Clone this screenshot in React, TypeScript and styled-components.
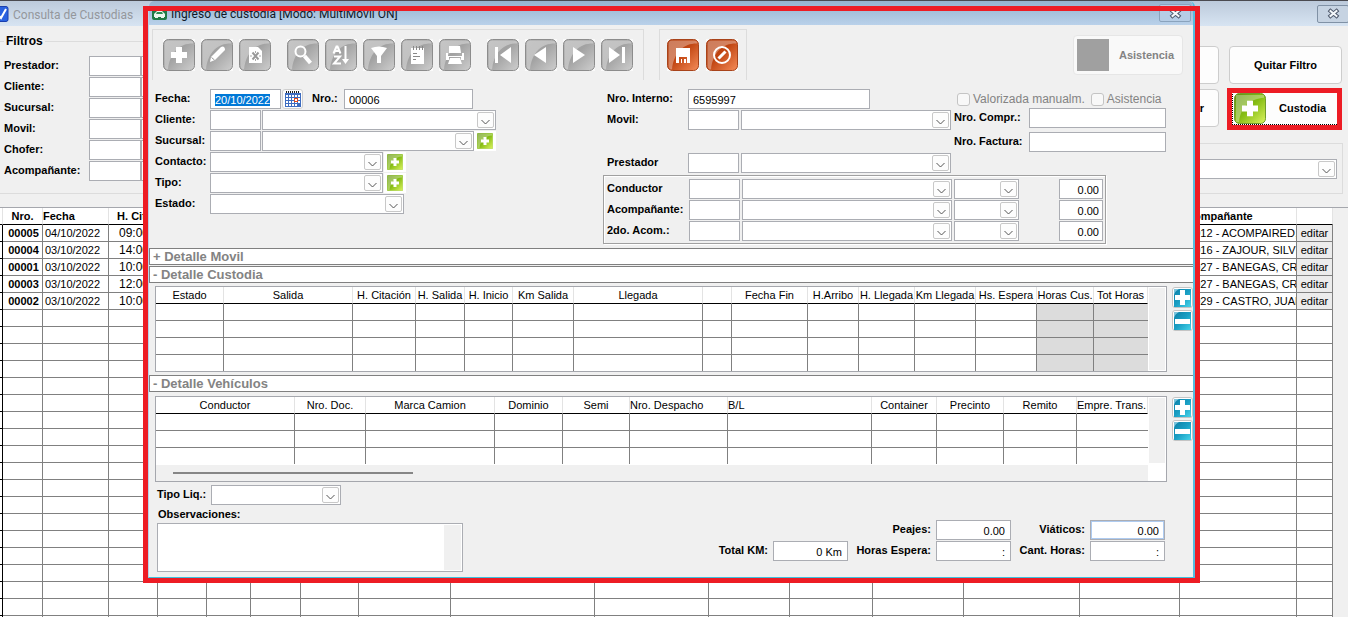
import React, { ReactNode, useEffect, useId, useRef } from "react";
import styled, { createGlobalStyle, css } from "styled-components";

const RED = "#ed1c24";
const LINE = "#808080";
const FIELD = "#abadb3";

const GlobalStyle = createGlobalStyle`
  * { box-sizing: border-box; }
  body {
    margin: 0;
    background: #f0f0f0;
    color: #000;
    font: 11px/13px "Liberation Sans", Arial, sans-serif;
  }
  input, select, textarea, button { font: inherit; color: inherit; margin: 0; }
  ::selection { background: #0078d7; color: #fff; }
`;

/* ---------- window chrome ---------- */

const Desktop = styled.div`
  position: relative;
  height: 100vh;
  overflow: hidden;
  display: flex;
  flex-direction: column;
  border-top: 1px solid #4a4a50;
`;

const TitleBar = styled.header<{ $active?: boolean }>`
  display: flex;
  align-items: center;
  flex: none;
  height: ${(p) => (p.$active ? 24 : 25)}px;
  gap: 4px;
  padding-left: ${(p) => (p.$active ? 3 : 0)}px;
  background: ${(p) =>
    p.$active
      ? "linear-gradient(#96b3cf, #b9d1ea)"
      : "linear-gradient(#bccadb, #d7e4f2)"};
  color: ${(p) => (p.$active ? "#101a28" : "#94979c")};
  border-radius: ${(p) => (p.$active ? "5px 5px 0 0" : "0")};
`;

const Title = styled.h1`
  flex: 1;
  margin: 0;
  padding-top: 2px;
  font: 12px/16px Roboto, "Open Sans", sans-serif;
  white-space: nowrap;
`;

const CloseButton = styled.button<{ $active?: boolean }>`
  display: grid;
  place-items: center;
  width: 32px;
  height: 18px;
  margin-right: ${(p) => (p.$active ? 2 : -1)}px;
  padding: 0;
  border: 1px solid ${(p) => (p.$active ? "#8aa3bd" : "#8091a5")};
  border-radius: 2px;
  background: ${(p) => (p.$active ? "#b6cde6" : "#c6d3e2")};
`;

const Modal = styled.section`
  position: absolute;
  left: 148px;
  right: 153px;
  top: 0;
  display: flex;
  flex-direction: column;
  background: #f0f0f0;
  border-left: 1px solid #b9d1ea;
  border-right: 2px solid #55bde0;
  border-bottom: 1px solid #3fc0dc;
  border-radius: 6px 6px 0 0;
`;

const ModalHighlight = styled.div`
  position: absolute;
  inset: 5px -7px -6px -6px;
  border: 5px solid ${RED};
  pointer-events: none;
`;

/* ---------- form parts ---------- */

const Label = styled.label<{ $w?: number; $right?: boolean }>`
  flex: none;
  width: ${(p) => (p.$w ? `${p.$w}px` : "auto")};
  font-weight: bold;
  white-space: nowrap;
  text-align: ${(p) => (p.$right ? "right" : "left")};
  padding-right: ${(p) => (p.$right ? 5 : 0)}px;
  padding-bottom: 2px;
`;

const Row = styled.div<{ $spaced?: boolean }>`
  display: flex;
  align-items: center;
  height: 20px;
  margin-top: ${(p) => (p.$spaced ? 22 : 0)}px;
`;

const Stack = styled.div<{ $gap?: number }>`
  display: flex;
  flex-direction: column;
  gap: ${(p) => p.$gap ?? 1}px;
`;

const Input = styled.input<{ $w: number; $num?: boolean; $lit?: boolean }>`
  flex: none;
  width: ${(p) => p.$w}px;
  height: 20px;
  padding: 2px ${(p) => (p.$num ? 5 : 3)}px 0 ${(p) => (p.$num ? 2 : 4)}px;
  border: 1px solid ${FIELD};
  background: #fff;
  outline: none;
  text-align: ${(p) => (p.$num ? "right" : "left")};
  ${(p) => p.$lit && css`box-shadow: inset 0 0 0 1px #aecbf0;`}
`;

const Pair = styled.div<{ $gap?: number }>`
  display: flex;
  gap: ${(p) => p.$gap ?? 1}px;
`;

const SelectBox = styled.span<{ $w?: number }>`
  display: grid;
  flex: ${(p) => (p.$w ? "none" : "1")};
  width: ${(p) => (p.$w ? `${p.$w}px` : "auto")};
  height: 20px;
  & > * { grid-area: 1 / 1; }
`;

const NativeSelect = styled.select`
  appearance: none;
  width: 100%;
  height: 20px;
  padding: 0 20px 0 4px;
  border: 1px solid ${FIELD};
  border-radius: 0;
  background: #fff;
`;

const Arrow = styled.span`
  justify-self: end;
  display: grid;
  place-items: center;
  width: 17px;
  height: 16px;
  margin: 2px 2px 0 0;
  padding-top: 3px;
  border: 1px solid #c8c8c8;
  border-radius: 2px;
  background: #fdfdfd;
  pointer-events: none;
`;

function Select({ w, id, label }: { w?: number; id?: string; label?: string }) {
  return (
    <SelectBox $w={w}>
      <NativeSelect id={id} aria-label={label} />
      <Arrow>
        <svg width="9" height="6" viewBox="0 0 9 6" fill="none" stroke="#555">
          <path d="M.5 1l4 4 4-4" />
        </svg>
      </Arrow>
    </SelectBox>
  );
}

const AddButton = styled.button`
  display: grid;
  place-items: center;
  width: 22px;
  height: 20px;
  padding: 0;
  border: 0;
  background: #fff;
`;

function GreenPlus({ w, h, round }: { w: number; h: number; round?: boolean }) {
  const id = useId();
  return (
    <svg width={w} height={h} viewBox="0 0 32 32" preserveAspectRatio="none" aria-hidden="true">
      <defs>
        <linearGradient id={id} x1="0" y1="0" x2="1" y2="1">
          <stop offset="0" stopColor="#5f9010" />
          <stop offset=".5" stopColor="#86bd14" />
          <stop offset="1" stopColor="#dcf460" />
        </linearGradient>
      </defs>
      <rect x=".5" y=".5" width="31" height="31" rx={round ? 5 : 1} fill={`url(#${id})`} stroke={round ? "#6f9a2a" : "#9cc83c"} />
      <path d="M2 2h28v3C17 6 7 13 5 30H2z" fill="#fff" opacity=".32" />
      <path d="M13 8h6v5h5v6h-5v5h-6v-5H8v-6h5z" fill="#fff" />
    </svg>
  );
}

function Add({ label }: { label: string }) {
  return (
    <AddButton type="button" aria-label={label}>
      <GreenPlus w={16} h={16} />
    </AddButton>
  );
}

/* ---------- toolbar ---------- */

const Toolbar = styled.div`
  display: flex;
  align-items: flex-start;
  padding: 4px 10px 0 3px;
  gap: 15px;
  height: 56px;
`;

const ToolGroup = styled.div<{ $tight?: boolean }>`
  display: flex;
  gap: ${(p) => (p.$tight ? 7 : 16)}px;
  height: 51px;
  padding: ${(p) => (p.$tight ? "9px 8px 0 7px" : "9px 10px 0 10px")};
  border: 1px solid #dcdcdc;
  border-bottom: 0;
`;

const ToolSet = styled.div`
  display: flex;
  gap: 6px;
`;

const ToolButton = styled.button`
  display: block;
  width: 32px;
  height: 32px;
  padding: 0;
  border: 0;
  background: #fafafa;
  line-height: 0;
`;

function Tool({ label, hot, children }: { label: string; hot?: boolean; children: ReactNode }) {
  const id = useId();
  return (
    <ToolButton type="button" aria-label={label}>
      <svg width="32" height="32" viewBox="0 0 32 32">
        <defs>
          <linearGradient id={id} x1="0" y1="0" x2="1" y2="1">
            <stop offset="0" stopColor={hot ? "#b03808" : "#a8a8a8"} />
            <stop offset=".45" stopColor={hot ? "#c04410" : "#a2a2a2"} />
            <stop offset="1" stopColor={hot ? "#f58d5a" : "#cecece"} />
          </linearGradient>
        </defs>
        <rect x=".5" y=".5" width="31" height="31" rx="5" fill={`url(#${id})`} stroke={hot ? "#a8431a" : "#8c8c8c"} />
        <path d="M5 1.500h22q3.500 0 3.500 3C18 4 7 12 5 30.500q-3.500 0-3.500-4V5q0-3.500 3.500-3.500z" fill="#fff" opacity=".34" />
        {children}
      </svg>
    </ToolButton>
  );
}

const AttendanceButton = styled.button`
  display: flex;
  align-items: center;
  gap: 10px;
  width: 110px;
  height: 40px;
  margin: 6px 0 0 auto;
  padding: 0 5px 0 3px;
  border: 1px solid #e6e6e6;
  border-radius: 4px;
  background: #f9f9f9;
  color: #838383;
  font-weight: bold;
`;

const Swatch = styled.span`
  width: 32px;
  height: 32px;
  background: #a0a0a0;
`;

/* ---------- modal layout ---------- */

const FormArea = styled.div`
  display: flex;
  height: 167px;
  padding: 8px 10px 0 6px;
`;

const LeftForm = styled(Stack)`
  flex: none;
  width: 448px;
`;

const RightForm = styled.div`
  display: flex;
  flex-direction: column;
  gap: 2px;
`;

const RightTop = styled.div`
  display: flex;
  gap: 3px;
  padding-left: 4px;
`;

const Crew = styled(Stack)`
  align-self: flex-start;
  padding: 3px 2px 2px 3px;
  border: 1px solid #a0a0a0;
  box-shadow: inset 1px 1px 0 #fff, 1px 1px 0 #fff;
`;

const CrewRow = styled(Row)`
  gap: 2px;
`;

const CrewAmount = styled.div`
  padding-left: 38px;
`;

const AmountInput = styled(Input)`
  padding-right: 3px;
`;

const CalendarButton = styled.button`
  display: grid;
  place-items: center;
  width: 21px;
  height: 20px;
  margin: 0 0 0 1px;
  padding: 0;
  border: 1px solid #cfcfcf;
  border-radius: 3px;
  background: #fdfdfd;
`;

const NumberLabel = styled(Label)`
  padding-left: 9px;
`;

const CheckRow = styled.div`
  display: flex;
  align-items: center;
  height: 19px;
  padding: 2px 0 0 3px;
  gap: 6px;
`;

const CheckLabel = styled.label`
  display: flex;
  align-items: center;
  gap: 3px;
  color: #838383;
  font-size: 12px;
  white-space: nowrap;
`;

const Check = styled.input`
  appearance: none;
  width: 13px;
  height: 13px;
  border: 1px solid #c4c4c4;
  border-radius: 3px;
  background: #f8f8f8;
`;

const SectionBar = styled.button<{ $after?: boolean }>`
  display: block;
  height: 17px;
  margin-top: ${(p) => (p.$after ? 1 : 0)}px;
  padding: 0 3px;
  border: 1px solid ${LINE};
  border-right: 0;
  background: #fff;
  color: #838383;
  font-weight: bold;
  font-size: 13px;
  line-height: 15px;
  text-align: left;
`;

const GridArea = styled.div<{ $top: number }>`
  display: flex;
  gap: 5px;
  padding: ${(p) => p.$top}px 0 3px 6px;
`;

const GridBox = styled.div`
  flex: 1;
  min-width: 0;
  display: grid;
  grid-template-columns: minmax(0, 1fr) 18px;
  align-content: start;
  height: 86px;
  border: 1px solid #a5a7ad;
  background: #fff;
`;

const DataTable = styled.table`
  width: 100%;
  table-layout: fixed;
  border-collapse: separate;
  border-spacing: 0;
  background: #fff;
`;

const HeadCell = styled.th<{ $left?: boolean; $bold?: boolean }>`
  height: 17px;
  padding: 1px 0 0 0;
  border-right: 1px solid #e3e3e3;
  border-bottom: 1px solid #000;
  font-weight: ${(p) => (p.$bold ? "bold" : "normal")};
  text-align: ${(p) => (p.$left ? "left" : "center")};
  white-space: nowrap;
  overflow: hidden;
`;

const Cell = styled.td<{ $shade?: boolean; $last?: boolean; $edge?: boolean }>`
  height: ${(p) => (p.$last ? 16 : 17)}px;
  padding: 0;
  border-right: ${(p) => (p.$edge ? 0 : 1)}px solid ${LINE};
  border-bottom: ${(p) => (p.$last ? 0 : 1)}px solid ${LINE};
  background: ${(p) => (p.$shade ? "#dcdcdc" : "#fff")};
`;

const VScroll = styled.div`
  border: 1px solid #fff;
  background: #f0f0f0;
`;

const HScroll = styled.div`
  display: flex;
  align-items: center;
  height: 17px;
  padding: 0 0 1px 17px;
  border-top: 1px solid #fff;
  background: #f0f0f0;
`;

const Thumb = styled.div`
  width: 240px;
  height: 2px;
  background: #868686;
`;

const SideButtons = styled.div`
  display: flex;
  flex-direction: column;
  gap: 2px;
  padding-top: 1px;
`;

const SideButton = styled.button`
  width: 21px;
  height: 21px;
  padding: 0;
  border: 1px solid #c4c4c4;
  border-radius: 3px;
  background: #fff;
  line-height: 0;
`;

function BlueButton({ minus, label }: { minus?: boolean; label: string }) {
  const id = useId();
  return (
    <SideButton type="button" aria-label={label}>
      <svg width="19" height="19" viewBox="0 0 19 19">
        <defs>
          <linearGradient id={id} x1="0" y1="0" x2="1" y2="1">
            <stop offset="0" stopColor="#0d7fa6" />
            <stop offset=".5" stopColor="#1a9fc4" />
            <stop offset="1" stopColor="#46d4ea" />
          </linearGradient>
        </defs>
        <rect x="1" y="1" width="17" height="18" fill={`url(#${id})`} />
        <path d="M1 1h5Q2 3 1 7z" fill="#7cc4dc" />
        <path d={minus ? "M2 8h15v5H2z" : "M7 2h5v5h5v5h-5v5H7v-5H2V7h5z"} fill="#fff" />
      </svg>
    </SideButton>
  );
}

interface Column {
  name: string;
  w?: number;
  left?: boolean;
  shade?: boolean;
}

const custodyColumns: Column[] = [
  { name: "Estado", w: 68 },
  { name: "Salida", w: 129 },
  { name: "H. Citación", w: 63 },
  { name: "H. Salida", w: 49 },
  { name: "H. Inicio", w: 48 },
  { name: "Km Salida", w: 61 },
  { name: "Llegada" },
  { name: "", w: 29 },
  { name: "Fecha Fin", w: 76 },
  { name: "H.Arribo", w: 51 },
  { name: "H. Llegada", w: 56 },
  { name: "Km Llegada", w: 61 },
  { name: "Hs. Espera", w: 61 },
  { name: "Horas Cus.", w: 57, shade: true },
  { name: "Tot Horas", w: 54, shade: true },
];

const vehicleColumns: Column[] = [
  { name: "Conductor", w: 139 },
  { name: "Nro. Doc.", w: 71 },
  { name: "Marca Camion", w: 129 },
  { name: "Dominio", w: 68 },
  { name: "Semi", w: 67 },
  { name: "Nro. Despacho", w: 98, left: true },
  { name: "B/L", left: true },
  { name: "Container", w: 65 },
  { name: "Precinto", w: 67 },
  { name: "Remito", w: 73 },
  { name: "Empre. Trans.", w: 71, left: true },
];

function EmptyGrid({ columns, rows }: { columns: Column[]; rows: number }) {
  return (
    <DataTable>
      <colgroup>
        {columns.map((c, i) => (
          <col key={i} width={c.w} />
        ))}
      </colgroup>
      <thead>
        <tr>
          {columns.map((c, i) => (
            <HeadCell key={i} $left={c.left}>{c.name}</HeadCell>
          ))}
        </tr>
      </thead>
      <tbody>
        {Array.from({ length: rows }, (_, r) => (
          <tr key={r}>
            {columns.map((c, i) => (
              <Cell key={i} $shade={c.shade} $last={r === rows - 1} $edge={i === columns.length - 1} />
            ))}
          </tr>
        ))}
      </tbody>
    </DataTable>
  );
}

const Footer = styled.div`
  display: flex;
  justify-content: space-between;
  align-items: flex-end;
  padding: 0 28px 5px 8px;
`;

const NotesLabel = styled(Label)`
  display: block;
  padding: 3px 0 2px 1px;
`;

const NotesBox = styled.div`
  display: grid;
  grid-template-columns: 1fr 17px;
  width: 306px;
  height: 49px;
  padding: 1px;
  border: 1px solid ${FIELD};
  background: #fff;
`;

const Notes = styled.textarea`
  border: 0;
  padding: 2px;
  resize: none;
  outline: none;
  overflow: hidden;
`;

const NotesScroll = styled.div`
  background: #f0f0f0;
`;

const Totals = styled(Stack)`
  padding-bottom: 11px;
`;

const TotalRow = styled(Row)`
  justify-content: flex-end;
`;

/* ---------- list window behind ---------- */

const FilterArea = styled.div`
  display: flex;
  justify-content: space-between;
  flex: none;
  height: 182px;
  border-bottom: 1px solid #a5a7ad;
`;

const Filters = styled.fieldset`
  width: 420px;
  height: 160px;
  margin: 8px 0 0;
  padding: 8px 0 0 4px;
  border: 1px solid #dcdcdc;
  border-left: 0;
`;

const Legend = styled.legend`
  padding: 0 2px;
  font-weight: bold;
  font-size: 12px;
  line-height: 14px;
`;

const Actions = styled.div`
  display: flex;
  flex-direction: column;
  width: 440px;
  padding: 20px 5px 0 0;
`;

const ActionGrid = styled.div`
  display: grid;
  grid-template-columns: 113px 113px;
  grid-auto-rows: 38px;
  gap: 5px 10px;
  justify-content: end;
  padding-right: 1px;
`;

const ActionButton = styled.button<{ $end?: boolean }>`
  padding: 0 ${(p) => (p.$end ? 14 : 0)}px 0 0;
  border: 1px solid #cdcdcd;
  border-radius: 4px;
  background: #fdfdfd;
  font-weight: bold;
  text-align: ${(p) => (p.$end ? "right" : "center")};
`;

const CustodyWrap = styled.div`
  position: relative;
  display: grid;
  &::after {
    content: "";
    position: absolute;
    inset: -1px 0 -3px -2px;
    border: 5px solid ${RED};
    pointer-events: none;
  }
`;

const CustodyButton = styled.button`
  display: flex;
  padding: 2px;
  border: 1px solid #cdcdcd;
  background: #fdfdfd;
  font-weight: bold;
`;

const CustodyFocus = styled.span`
  display: flex;
  align-items: center;
  flex: 1;
  align-self: stretch;
  gap: 13px;
  padding-left: 1px;
  border: 1px dotted #000;
`;

const GroupBox = styled.div`
  display: flex;
  height: 51px;
  margin-top: 16px;
  padding: 15px 5px 0;
  border: 1px solid #dcdcdc;
`;

const ListArea = styled.div`
  flex: 1;
  overflow: hidden;
  padding-right: 15px;
  background: #f0f0f0;
`;

const ListCell = styled(Cell)<{ $align?: string; $bold?: boolean; $gutter?: boolean; $big?: boolean }>`
  padding: 0 0 0 2px;
  font-size: ${(p) => (p.$big ? 12 : 11)}px;
  font-weight: ${(p) => (p.$bold ? "bold" : "normal")};
  text-align: ${(p) => p.$align ?? "left"};
  white-space: nowrap;
  overflow: hidden;
  ${(p) => p.$gutter && css`border-right-color: #000; border-bottom-color: #000;`}
`;

const EditButton = styled.button`
  display: block;
  width: 100%;
  height: 16px;
  padding: 0;
  border: 0;
  background: #ececec;
`;

const records = [
  ["00005", "04/10/2022", "09:00", "00012 - ACOMPAIRED, ."],
  ["00004", "03/10/2022", "14:00", "00016 - ZAJOUR, SILVI"],
  ["00001", "03/10/2022", "10:00", "00027 - BANEGAS, CRI"],
  ["00003", "03/10/2022", "12:00", "00027 - BANEGAS, CRI"],
  ["00002", "03/10/2022", "10:00", "00029 - CASTRO, JUAN"],
];

const listWidths = [3, 40, 66, 49, 49, 44, 50, 58, 92, undefined, 114, 81, 83, 91, 116, 100, 117, 36];
const blankCells = [4, 5, 6, 7, 8, 9, 10, 11, 12, 13, 14, 15];

function RecordList() {
  return (
    <DataTable>
      <colgroup>
        {listWidths.map((w, i) => (
          <col key={i} width={w} />
        ))}
      </colgroup>
      <thead>
        <tr>
          <HeadCell />
          <HeadCell $bold>Nro.</HeadCell>
          <HeadCell $bold $left>Fecha</HeadCell>
          <HeadCell $bold>H. Cit.</HeadCell>
          {blankCells.map((i) => (
            <HeadCell key={i} />
          ))}
          <HeadCell $bold $left>Acompañante</HeadCell>
          <HeadCell />
        </tr>
      </thead>
      <tbody>
        {records.map(([nro, fecha, hora, acomp]) => (
          <tr key={nro}>
            <ListCell $gutter />
            <ListCell $bold $align="center">{nro}</ListCell>
            <ListCell>{fecha}</ListCell>
            <ListCell $align="center" $big>{hora}</ListCell>
            {blankCells.map((i) => (
              <ListCell key={i} />
            ))}
            <ListCell>{acomp}</ListCell>
            <Cell>
              <EditButton type="button">editar</EditButton>
            </Cell>
          </tr>
        ))}
        {Array.from({ length: 19 }, (_, r) => (
          <tr key={r}>
            {listWidths.map((_w, i) => (
              <ListCell key={i} $gutter={i === 0} />
            ))}
          </tr>
        ))}
      </tbody>
    </DataTable>
  );
}

function CloseIcon() {
  return (
    <svg width="13" height="11" viewBox="0 0 13 11" fill="none" strokeLinecap="square">
      <path d="M3.500 3l6 5M9.500 3l-6 5" stroke="#4b5568" strokeWidth="4" />
      <path d="M3.500 3l6 5M9.500 3l-6 5" stroke="#f4f7fa" strokeWidth="2" />
    </svg>
  );
}

const filterNames = ["Prestador:", "Cliente:", "Sucursal:", "Movil:", "Chofer:", "Acompañante:"];
const crewNames = ["Conductor", "Acompañante:", "2do. Acom.:"];

export default function App() {
  const dateRef = useRef<HTMLInputElement>(null);

  useEffect(() => {
    dateRef.current?.focus();
    dateRef.current?.select();
  }, []);

  return (
    <>
      <GlobalStyle />
      <Desktop>
        <TitleBar>
          <svg width="9" height="16" viewBox="0 0 9 16">
            <rect x="-8" y=".5" width="16" height="15" rx="2" fill="#2a62e0" stroke="#1a3fae" />
            <path d="M-1 10l2 2L6 3" fill="none" stroke="#fff" strokeWidth="2" />
          </svg>
          <Title>Consulta de Custodias</Title>
          <CloseButton type="button" aria-label="Cerrar consulta">
            <CloseIcon />
          </CloseButton>
        </TitleBar>

        <FilterArea>
          <Filters>
            <Legend>Filtros</Legend>
            <Stack>
              {filterNames.map((name, i) => (
                <Row key={name}>
                  <Label htmlFor={`filter-${i}`} $w={85}>{name}</Label>
                  <Pair $gap={0}>
                    <Input id={`filter-${i}`} $w={52} />
                    <Input aria-label={`${name} nombre`} $w={200} />
                  </Pair>
                </Row>
              ))}
            </Stack>
          </Filters>
          <Actions>
            <ActionGrid>
              <ActionButton type="button" aria-label="Filtrar" />
              <ActionButton type="button">Quitar Filtro</ActionButton>
              <ActionButton type="button" $end>Imprimir</ActionButton>
              <CustodyWrap>
                <CustodyButton type="button">
                  <CustodyFocus>
                    <GreenPlus w={32} h={31} round />
                    Custodia
                  </CustodyFocus>
                </CustodyButton>
              </CustodyWrap>
            </ActionGrid>
            <GroupBox>
              <Select label="Orden" />
            </GroupBox>
          </Actions>
        </FilterArea>

        <ListArea>
          <RecordList />
        </ListArea>

        <Modal role="dialog" aria-labelledby="dialog-title">
          <TitleBar $active>
            <svg width="15" height="14" viewBox="0 0 15 14">
              <rect width="15" height="14" rx="2" fill="#1f7a45" />
              <path d="M2 8l3-3h5l3 3v3H2z" fill="#e9f5ec" />
              <path d="M5 6h5l1 2H4z" fill="#2a8a52" />
              <path d="M3 11h3M9 11h3" stroke="#e9f5ec" strokeWidth="2" />
            </svg>
            <Title id="dialog-title">Ingreso de custodia [Modo: MultiMovil ON]</Title>
            <CloseButton type="button" $active aria-label="Cerrar ingreso">
              <CloseIcon />
            </CloseButton>
          </TitleBar>

          <Toolbar>
            <ToolGroup>
              <ToolSet>
                <Tool label="Nuevo">
                  <path d="M13 8h6v5h5v6h-5v5h-6v-5H8v-6h5z" fill="#fff" />
                </Tool>
                <Tool label="Modificar">
                  <path d="M9 23l1-5L20 8q2-1 3 0t1 3L14 21z" fill="#fff" />
                  <path d="M10.500 18.500l3 2.500" stroke="#999" />
                </Tool>
                <Tool label="Eliminar">
                  <path d="M10 8h9l4 4v12H10z" fill="#fff" />
                  <path d="M13.500 13.500l6 7M19.500 13.500l-6 7" stroke="#999" strokeWidth="2" />
                  <path d="M11 17h2M20 17h2M16.500 12v2M16.500 20v2" stroke="#aaa" />
                </Tool>
              </ToolSet>
              <ToolSet>
                <Tool label="Buscar">
                  <circle cx="13.500" cy="12.500" r="5" fill="#b5b5b5" stroke="#fff" strokeWidth="2" />
                  <path d="M17.500 17l6 7" stroke="#fff" strokeWidth="4" />
                </Tool>
                <Tool label="Ordenar">
                  <g fill="none" stroke="#fff" strokeWidth="2">
                    <path d="M8.500 14.500l3-7h1l3 7M10 12h5M9 17.500h6l-6 7h7M20.500 7v15" />
                    <path d="M17 20h7l-3.500 5z" fill="#fff" stroke="none" />
                  </g>
                </Tool>
                <Tool label="Filtrar">
                  <path d="M8 9q8-3 16 0l-6 8v7h-4v-7z" fill="#fff" />
                </Tool>
                <Tool label="Notas">
                  <path d="M10 9h13v16H10z" fill="#fff" />
                  <path d="M12.500 7v4M15.500 7v4M18.500 7v4M21.500 7v4" stroke="#888" />
                  <path d="M12 14.500h4M12 17.500h7M12 20.500h3" stroke="#888" />
                </Tool>
                <Tool label="Imprimir">
                  <path d="M10 7h11l1 7H10zM7 14h2v3h14v-3h2v7h-3v-3H10v3H7zM11 19h10l2 6H9z" fill="#fff" />
                </Tool>
              </ToolSet>
              <ToolSet>
                <Tool label="Primero">
                  <path d="M8 8h3v16H8zM24 8v16l-11-8z" fill="#fff" />
                </Tool>
                <Tool label="Anterior">
                  <path d="M21 8v16L9 16z" fill="#fff" />
                </Tool>
                <Tool label="Siguiente">
                  <path d="M10 8v16l12-8z" fill="#fff" />
                </Tool>
                <Tool label="Último">
                  <path d="M8 8v16l11-8zM21 8h3v16h-3z" fill="#fff" />
                </Tool>
              </ToolSet>
            </ToolGroup>
            <ToolGroup $tight>
              <Tool label="Guardar" hot>
                <path d="M9 9h14v15h-3v-6h-8v6H9zM14 20h1v4h-1zM17 20h2v4h-2z" fill="#fff" />
              </Tool>
              <Tool label="Cancelar" hot>
                <circle cx="16" cy="16" r="8" fill="none" stroke="#fff" strokeWidth="2" />
                <path d="M12.500 19.500l7-7" stroke="#fff" strokeWidth="3" />
              </Tool>
            </ToolGroup>
            <AttendanceButton type="button" disabled>
              <Swatch />
              Asistencia
            </AttendanceButton>
          </Toolbar>

          <FormArea>
            <LeftForm>
              <Row>
                <Label htmlFor="fecha" $w={55}>Fecha:</Label>
                <Input id="fecha" ref={dateRef} defaultValue="20/10/2022" $w={71} />
                <CalendarButton type="button" aria-label="Calendario">
                  <svg width="16" height="16" viewBox="0 0 16 16">
                    <rect y="2" width="16" height="14" fill="#3d6cc0" />
                    <path d="M1 1h14" stroke="#222" strokeWidth="2" strokeDasharray="1 1" />
                    <path
                      d="M1 4h2v2H1zM4 4h2v2H4zM7 4h2v2H7zM10 4h2v2h-2zM13 4h2v2h-2zM1 7h2v2H1zM4 7h2v2H4zM7 7h2v2H7zM13 7h2v2h-2zM1 10h2v2H1zM4 10h2v2H4zM7 10h2v2H7zM10 10h2v2h-2zM13 10h2v2h-2zM1 13h2v2H1zM4 13h2v2H4zM7 13h2v2H7zM10 13h2v2h-2z"
                      fill="#fff"
                    />
                    <rect x="9.500" y="7.500" width="3" height="3" fill="#fff" stroke="#e04a1c" />
                  </svg>
                </CalendarButton>
                <NumberLabel htmlFor="nro" $w={41}>Nro.:</NumberLabel>
                <Input id="nro" defaultValue="00006" $w={129} />
              </Row>
              <Row>
                <Label htmlFor="cliente" $w={55}>Cliente:</Label>
                <Pair>
                  <Input id="cliente" $w={51} />
                  <Select w={234} label="Nombre del cliente" />
                </Pair>
              </Row>
              <Row>
                <Label htmlFor="sucursal" $w={55}>Sucursal:</Label>
                <Pair>
                  <Input id="sucursal" $w={51} />
                  <Select w={212} label="Nombre de la sucursal" />
                </Pair>
                <Add label="Agregar sucursal" />
              </Row>
              <Row>
                <Label htmlFor="contacto" $w={55}>Contacto:</Label>
                <Pair>
                  <Select w={173} id="contacto" />
                  <Add label="Agregar contacto" />
                </Pair>
              </Row>
              <Row>
                <Label htmlFor="tipo" $w={55}>Tipo:</Label>
                <Pair>
                  <Select w={173} id="tipo" />
                  <Add label="Agregar tipo" />
                </Pair>
              </Row>
              <Row>
                <Label htmlFor="estado" $w={55}>Estado:</Label>
                <Select w={194} id="estado" />
              </Row>
            </LeftForm>

            <RightForm>
              <RightTop>
                <Stack>
                  <Row>
                    <Label htmlFor="interno" $w={81}>Nro. Interno:</Label>
                    <Input id="interno" defaultValue="6595997" $w={182} />
                  </Row>
                  <Row>
                    <Label htmlFor="movil" $w={81}>Movil:</Label>
                    <Pair $gap={2}>
                      <Input id="movil" $w={51} />
                      <Select w={210} label="Nombre del movil" />
                    </Pair>
                  </Row>
                  <Row $spaced>
                    <Label htmlFor="prestador" $w={81}>Prestador</Label>
                    <Pair $gap={2}>
                      <Input id="prestador" $w={51} />
                      <Select w={210} label="Nombre del prestador" />
                    </Pair>
                  </Row>
                </Stack>
                <div>
                  <CheckRow>
                    <CheckLabel>
                      <Check type="checkbox" disabled />
                      Valorizada manualm.
                    </CheckLabel>
                    <CheckLabel>
                      <Check type="checkbox" disabled />
                      Asistencia
                    </CheckLabel>
                  </CheckRow>
                  <Stack $gap={4}>
                    <Row>
                      <Label htmlFor="compr" $w={75}>Nro. Compr.:</Label>
                      <Input id="compr" $w={137} />
                    </Row>
                    <Row>
                      <Label htmlFor="factura" $w={75}>Nro. Factura:</Label>
                      <Input id="factura" $w={137} />
                    </Row>
                  </Stack>
                </div>
              </RightTop>
              <Crew>
                {crewNames.map((name, i) => (
                  <CrewRow key={name}>
                    <Label htmlFor={`crew-${i}`} $w={80}>{name}</Label>
                    <Input id={`crew-${i}`} $w={51} />
                    <Select w={210} label={`${name} nombre`} />
                    <Select w={65} label={`${name} turno`} />
                    <CrewAmount>
                      <AmountInput $w={44} $num defaultValue="0.00" aria-label={`${name} importe`} />
                    </CrewAmount>
                  </CrewRow>
                ))}
              </Crew>
            </RightForm>
          </FormArea>

          <SectionBar type="button">+ Detalle Movil</SectionBar>
          <SectionBar type="button" $after>- Detalle Custodia</SectionBar>
          <GridArea $top={3}>
            <GridBox>
              <EmptyGrid columns={custodyColumns} rows={4} />
              <VScroll />
            </GridBox>
            <SideButtons>
              <BlueButton label="Agregar custodia" />
              <BlueButton minus label="Quitar custodia" />
            </SideButtons>
          </GridArea>

          <SectionBar type="button">- Detalle Vehículos</SectionBar>
          <GridArea $top={4}>
            <GridBox>
              <EmptyGrid columns={vehicleColumns} rows={3} />
              <VScroll />
              <HScroll>
                <Thumb />
              </HScroll>
            </GridBox>
            <SideButtons>
              <BlueButton label="Agregar vehículo" />
              <BlueButton minus label="Quitar vehículo" />
            </SideButtons>
          </GridArea>

          <Footer>
            <div>
              <Row>
                <Label htmlFor="tipoliq" $w={54}>Tipo Liq.:</Label>
                <Select w={130} id="tipoliq" />
              </Row>
              <NotesLabel htmlFor="obs">Observaciones:</NotesLabel>
              <NotesBox>
                <Notes id="obs" />
                <NotesScroll />
              </NotesBox>
            </div>
            <Totals>
              <TotalRow>
                <Label htmlFor="peajes" $w={88} $right>Peajes:</Label>
                <Input id="peajes" $w={75} $num defaultValue="0.00" />
                <Label htmlFor="viaticos" $w={79} $right>Viáticos:</Label>
                <Input id="viaticos" $w={75} $num $lit defaultValue="0.00" />
              </TotalRow>
              <TotalRow>
                <Label htmlFor="km" $w={88} $right>Total KM:</Label>
                <Input id="km" $w={75} $num defaultValue="0 Km" />
                <Label htmlFor="espera" $w={88} $right>Horas Espera:</Label>
                <Input id="espera" $w={75} $num defaultValue=":" />
                <Label htmlFor="horas" $w={79} $right>Cant. Horas:</Label>
                <Input id="horas" $w={75} $num defaultValue=":" />
              </TotalRow>
            </Totals>
          </Footer>
          <ModalHighlight />
        </Modal>
      </Desktop>
    </>
  );
}
